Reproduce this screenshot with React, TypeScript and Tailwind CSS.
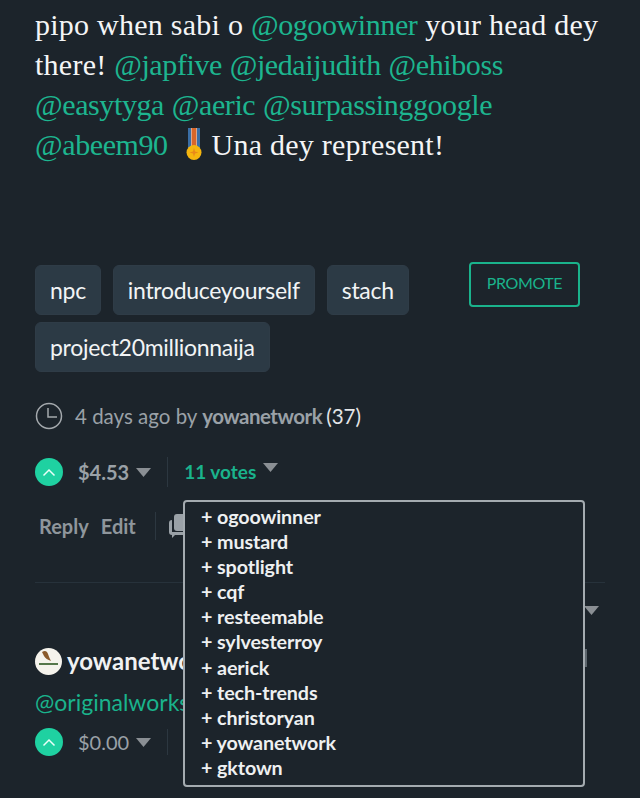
import { FC } from "react";

const voters = [
  "ogoowinner",
  "mustard",
  "spotlight",
  "cqf",
  "resteemable",
  "sylvesterroy",
  "aerick",
  "tech-trends",
  "christoryan",
  "yowanetwork",
  "gktown",
];

const Caret: FC<{ className?: string }> = ({ className }) => (
  <svg width="15" height="9" viewBox="0 0 15 9" className={className}>
    <path d="M0 0h15L7.500 9z" fill="#8a8f94" />
  </svg>
);

const UpVote: FC = () => (
  <span className="flex h-[28px] w-[28px] items-center justify-center rounded-full bg-[#1fd1a1]">
    <svg width="14" height="9" viewBox="0 0 14 9" fill="none" stroke="#e8fff8" strokeWidth="1.5">
      <path d="M1.500 7.500 7 2l5.500 5.500" />
    </svg>
  </span>
);

const Medal: FC = () => (
  <svg width="20" height="33" viewBox="0 0 20 33" className="mr-[7px] ml-[9px] inline-block align-[-6px]">
    <rect x="4" y="0" width="12" height="20" fill="#dfe6ee" />
    <rect x="4" y="0" width="3" height="20" fill="#3a6ea5" />
    <rect x="13" y="0" width="3" height="20" fill="#3a6ea5" />
    <rect x="7.500" y="0" width="5" height="20" fill="#d9662a" />
    <circle cx="10" cy="24.500" r="7.500" fill="#f5b60f" />
    <path d="M10 20l1 3.500 3.500 1-3.500 1-1 3.500-1-3.500-3.500-1 3.500-1z" fill="#e8891a" />
  </svg>
);

const Tag: FC<{ label: string }> = ({ label }) => (
  <span className="flex h-[50px] items-center rounded-[6px] border border-[#2f3c47] bg-[#2c3a45] px-[14px] text-[23px] tracking-[-0.3px] text-[#f2f4f5]">
    {label}
  </span>
);

const Mention: FC<{ name: string }> = ({ name }) => (
  <span className="tracking-[-0.4px] text-[#1db58f]">@{name}</span>
);

export default function App() {
  return (
    <div className="relative h-[798px] w-[640px] overflow-hidden bg-[#1c242b] pl-[35px] font-['Lato','Open_Sans',sans-serif]">
      {/* post body */}
      <p className="w-[580px] pt-[5px] font-['Liberation_Serif',serif] text-[30px] leading-[40px] tracking-[0.25px] text-[#f4f5f6]">
        pipo when sabi o <Mention name="ogoowinner" /> your head dey there! <Mention name="japfive" />{" "}
        <Mention name="jedaijudith" /> <Mention name="ehiboss" /> <Mention name="easytyga" /> <Mention name="aeric" />{" "}
        <Mention name="surpassinggoogle" /> <Mention name="abeem90" /> <Medal />
        Una dey represent!
      </p>

      {/* tags and promote */}
      <div className="mt-[100px] flex items-start">
        <div className="flex w-[420px] flex-wrap gap-x-[12px] gap-y-[7px]">
          <Tag label="npc" />
          <Tag label="introduceyourself" />
          <Tag label="stach" />
          <Tag label="project20millionnaija" />
        </div>
        <button className="ml-[14px] -mt-[3px] h-[45px] w-[111px] rounded-[4px] border-2 border-[#1ab38c] pb-[3px] text-[16px] tracking-[-0.4px] text-[#1ab38c]">
          PROMOTE
        </button>
      </div>

      {/* time and author */}
      <div className="mt-[29px] flex h-[30px] items-center text-[20.500px] text-[#9aa1a7]">
        <svg width="28" height="28" viewBox="0 0 28 28" fill="none" stroke="#a4a9ad" strokeWidth="1.500" className="mr-[12px]">
          <circle cx="14" cy="14" r="12.500" />
          <path d="M13 6v9h9" />
        </svg>
        <span>4 days ago by&nbsp;</span>
        <span className="font-bold tracking-[-0.5px]">yowanetwork</span>
        <span className="ml-[4px] text-[#e4e6e8]">(37)</span>
      </div>

      {/* votes row */}
      <div className="mt-[26px] flex h-[30px] items-center text-[20px]">
        <UpVote />
        <span className="ml-[15px] font-bold text-[#9aa1a7]">$4.53</span>
        <Caret className="ml-[7px]" />
        <span className="ml-[16px] h-[30px] w-px bg-[#2c3740]" />
        <span className="ml-[16px] text-[19px] font-bold text-[#1ab38c]">11 votes</span>
        <Caret className="ml-[7px] mb-[10px]" />
      </div>

      {/* actions */}
      <div className="mt-[25px] flex h-[28px] items-center text-[20px] font-bold text-[#8f969c]">
        <span className="ml-[4px]">Reply</span>
        <span className="ml-[12px]">Edit</span>
        <span className="ml-[19px] h-[28px] w-px bg-[#2c3740]" />
        <svg width="22" height="24" viewBox="0 0 22 24" className="ml-[13px]" fill="#9aa1a7">
          <rect x="5" y="0" width="17" height="17" rx="3" />
          <path d="M0 9a3 3 0 0 1 3-3v12h14a3 3 0 0 1-3 3H6l-3 3v-3a3 3 0 0 1-3-3z" />
        </svg>
      </div>

      <div className="mt-[42px] h-px w-[570px] bg-[#27323b]" />

      <Caret className="ml-[549px] mt-[23px]" />

      {/* reply */}
      <div className="mt-[31px] flex h-[30px] items-center text-[24px] font-bold text-[#f0f1f2]">
        <svg width="27" height="27" viewBox="0 0 27 27">
          <circle cx="13.500" cy="13.500" r="13.500" fill="#f5f3ec" />
          <path d="M7 4c3-2 5-1 6 2 1 3 2 5 3 7-3-1-6-3-7-5z" fill="#8a5a2b" />
          <rect x="4" y="15" width="19" height="2" fill="#55774a" />
        </svg>
        <span className="ml-[5px]">yowanetwork</span>
      </div>
      <div className="mt-[11px] h-[30px] text-[23px] leading-[30px] text-[#1ab38c]">@originalworks</div>
      <div className="mt-[10px] flex h-[30px] items-center text-[20px]">
        <UpVote />
        <span className="ml-[15px] text-[#9aa1a7]">$0.00</span>
        <Caret className="ml-[7px]" />
        <span className="ml-[16px] h-[26px] w-px bg-[#2c3740]" />
      </div>

      {/* small bar sticking out behind the dropdown */}
      <span className="absolute left-[585px] top-[649px] h-[18px] w-[2px] bg-[#5d666d]" />

      {/* votes dropdown */}
      <ul className="absolute left-[183px] top-[500px] h-[287px] w-[402px] rounded-[4px] border-2 border-[#a4abb0] bg-[#1c242b] pl-[16px] pt-[2px] text-[19.700px] font-bold leading-[25.100px] tracking-[-0.1px] text-[#eef0f1]">
        {voters.map((v) => (
          <li key={v}>+ {v}</li>
        ))}
      </ul>
    </div>
  );
}
